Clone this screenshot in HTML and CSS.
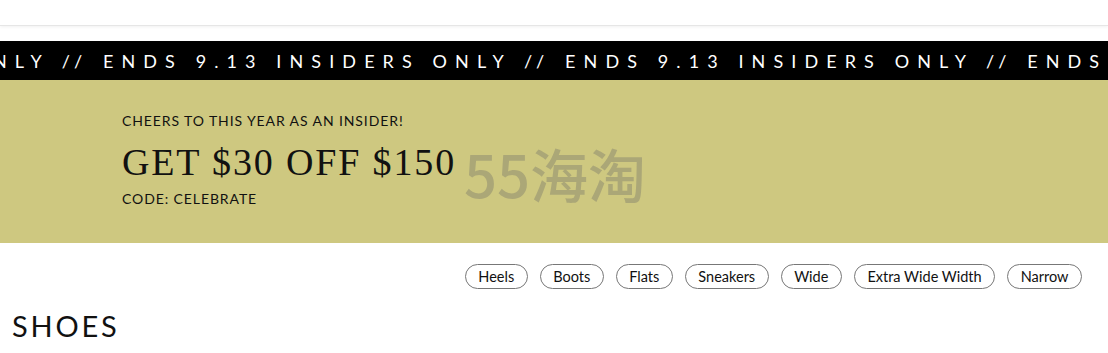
FILE: index.html
```html
<!DOCTYPE html>
<html lang="en">
<head>
    <meta charset="UTF-8">
    <meta name="viewport" content="width=device-width, initial-scale=1.0">
    <title>Shoes</title>
    <link rel="stylesheet" href="styles.css">
</head>
<body>
    <!-- Header -->
    <header class="site-header"></header>

    <!-- Ticker -->
    <div class="ticker">
        <div class="ticker-text">NLY // ENDS 9.13 INSIDERS ONLY // ENDS 9.13 INSIDERS ONLY // ENDS</div>
    </div>

    <!-- Promo Banner -->
    <section class="promo">
        <p class="promo-kicker">CHEERS TO THIS YEAR AS AN INSIDER!</p>
        <h2 class="promo-title">GET $30 OFF $150</h2>
        <p class="promo-code">CODE: CELEBRATE</p>
        <span class="watermark">55海淘</span>
    </section>

    <!-- Filter Chips -->
    <nav class="chips">
        <a href="#" class="chip">Heels</a>
        <a href="#" class="chip">Boots</a>
        <a href="#" class="chip">Flats</a>
        <a href="#" class="chip">Sneakers</a>
        <a href="#" class="chip">Wide</a>
        <a href="#" class="chip">Extra Wide Width</a>
        <a href="#" class="chip">Narrow</a>
    </nav>

    <h1 class="page-title">SHOES</h1>
</body>
</html>
```

FILE: styles.css
```css
:root {
    --ticker-bg: #000;
    --promo-bg: #cec880;
    --text-color: #111;
    --chip-border: #777;
}

* {
    margin: 0;
    padding: 0;
    box-sizing: border-box;
}

body {
    font-family: 'Lato', sans-serif;
    color: var(--text-color);
    background: #fff;
    overflow: hidden;
}

.site-header {
    height: 26px;
    border-bottom: 1px solid #e6e6e6;
    box-shadow: 0 1px 3px rgba(0, 0, 0, 0.06);
    margin-bottom: 15px;
}

.ticker {
    background-color: var(--ticker-bg);
    height: 39px;
    display: flex;
    align-items: center;
    overflow: hidden;
}

.ticker-text {
    color: #fff;
    font-size: 18px;
    letter-spacing: 8.1px;
    white-space: nowrap;
    margin-left: -7px;
}

.promo {
    position: relative;
    background-color: var(--promo-bg);
    height: 163px;
    padding: 32px 122px 0;
}

.promo-kicker {
    font-size: 14px;
    letter-spacing: 0.9px;
    line-height: 18px;
}

.promo-title {
    font-family: 'Liberation Serif', serif;
    font-weight: normal;
    font-size: 38px;
    letter-spacing: 1.85px;
    line-height: 44px;
    margin-top: 10px;
}

.promo-code {
    font-size: 14px;
    letter-spacing: 0.9px;
    line-height: 18px;
    margin-top: 6px;
}

.watermark {
    position: absolute;
    left: 464px;
    top: 64px;
    font-family: 'Noto Sans CJK SC', sans-serif;
    font-size: 58px;
    font-weight: 500;
    line-height: 1;
    color: rgba(100, 100, 100, 0.33);
}

.chips {
    display: flex;
    justify-content: flex-end;
    gap: 12px;
    padding: 21px 26px 0;
}

.chip {
    display: inline-flex;
    align-items: center;
    height: 25px;
    padding: 0 12.5px;
    border: 1px solid var(--chip-border);
    border-radius: 13px;
    font-size: 14.5px;
    color: var(--text-color);
    text-decoration: none;
}

.page-title {
    font-weight: normal;
    font-size: 29px;
    letter-spacing: 2.8px;
    padding-left: 12px;
    margin-top: 19px;
}
```
